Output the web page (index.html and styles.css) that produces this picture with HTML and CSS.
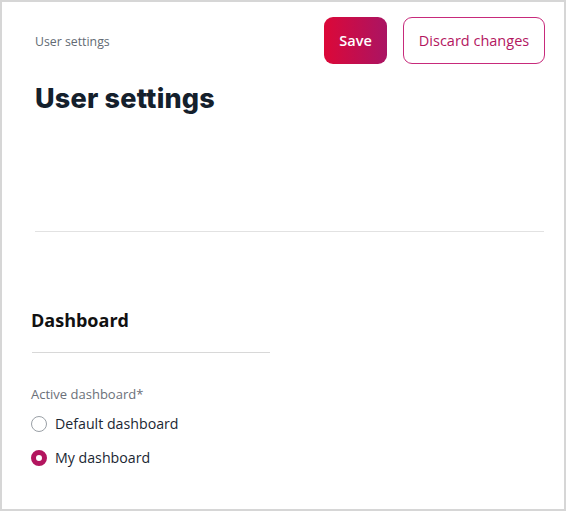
FILE: index.html
```html
<!DOCTYPE html>
<html lang="en">
<head>
<meta charset="utf-8">
<title>User settings</title>
<link rel="stylesheet" href="styles.css">
</head>
<body>
<div class="frame">
  <header class="header">
    <div class="header-text">
      <div class="breadcrumb">User settings</div>
      <h1 class="title">User settings</h1>
    </div>
    <div class="actions">
      <button class="btn btn-primary" type="button">Save</button>
      <button class="btn btn-outline" type="button">Discard changes</button>
    </div>
  </header>
  <hr class="divider">
  <section class="section">
    <h2 class="section-title">Dashboard</h2>
    <hr class="section-divider">
    <div class="field-label">Active dashboard*</div>
    <div class="radio-group">
      <label class="radio"><span class="radio-dot"></span><span>Default dashboard</span></label>
      <label class="radio"><span class="radio-dot checked"></span><span>My dashboard</span></label>
    </div>
  </section>
</div>
</body>
</html>
```
FILE: styles.css
```css
html, body { margin: 0; padding: 0; background: #fff; }
body { font-family: "Open Sans", "Noto Sans", sans-serif; }
.frame {
  box-sizing: border-box;
  width: 566px;
  height: 511px;
  border: 2px solid #d6d6d6;
  padding: 15px 20px 0 33px;
  overflow: hidden;
}
.header { display: flex; justify-content: space-between; align-items: flex-start; margin-right: -1px; }
.header-text { padding-top: 17px; }
.breadcrumb { font-size: 12.3px; line-height: 16px; color: #626a73; }
.title {
  margin: 31px 0 0;
  font-family: "Inter", sans-serif;
  font-weight: 800;
  font-size: 27px;
  line-height: 36px;
  color: #14202c;
  letter-spacing: 0.2px;
}
.actions { display: flex; gap: 16px; }
.btn {
  height: 47px;
  border-radius: 9px;
  font-family: "Open Sans", sans-serif;
  font-size: 14.5px;
  font-weight: 600;
  padding: 0;
  box-sizing: border-box;
  white-space: nowrap;
}
.btn-primary {
  width: 63px;
  border: none;
  color: #fff;
  background: linear-gradient(90deg, #dc0838 0%, #aa1463 100%);
}
.btn-outline {
  width: 142px;
  border: 1px solid #c72a7b;
  background: #fff;
  color: #b3165f;
  font-weight: 500;
}
.divider { margin: 114px 0 0; border: none; border-top: 1px solid #e2e2e2; height: 0; }
.section { margin-left: -4px; }
.section-title {
  margin: 76px 0 0;
  font-size: 18px;
  line-height: 24px;
  font-weight: 700;
  color: #111;
}
.section-divider { width: 238px; margin: 20px 0 0 1px; border: none; border-top: 1px solid #d8d8d8; height: 0; }
.field-label { margin-top: 32px; font-size: 13px; line-height: 18px; color: #6b7079; }
.radio-group { display: flex; flex-direction: column; gap: 10px; margin-top: 9px; }
.radio { display: flex; align-items: center; gap: 8px; font-size: 14.2px; line-height: 24px; color: #1b2733; }
.radio-dot {
  box-sizing: border-box;
  width: 16px; height: 16px;
  border-radius: 50%;
  border: 1px solid #9aa0a6;
  background: #fff;
}
.radio-dot.checked { border: 5px solid #b3155f; background: #fff; }
```
